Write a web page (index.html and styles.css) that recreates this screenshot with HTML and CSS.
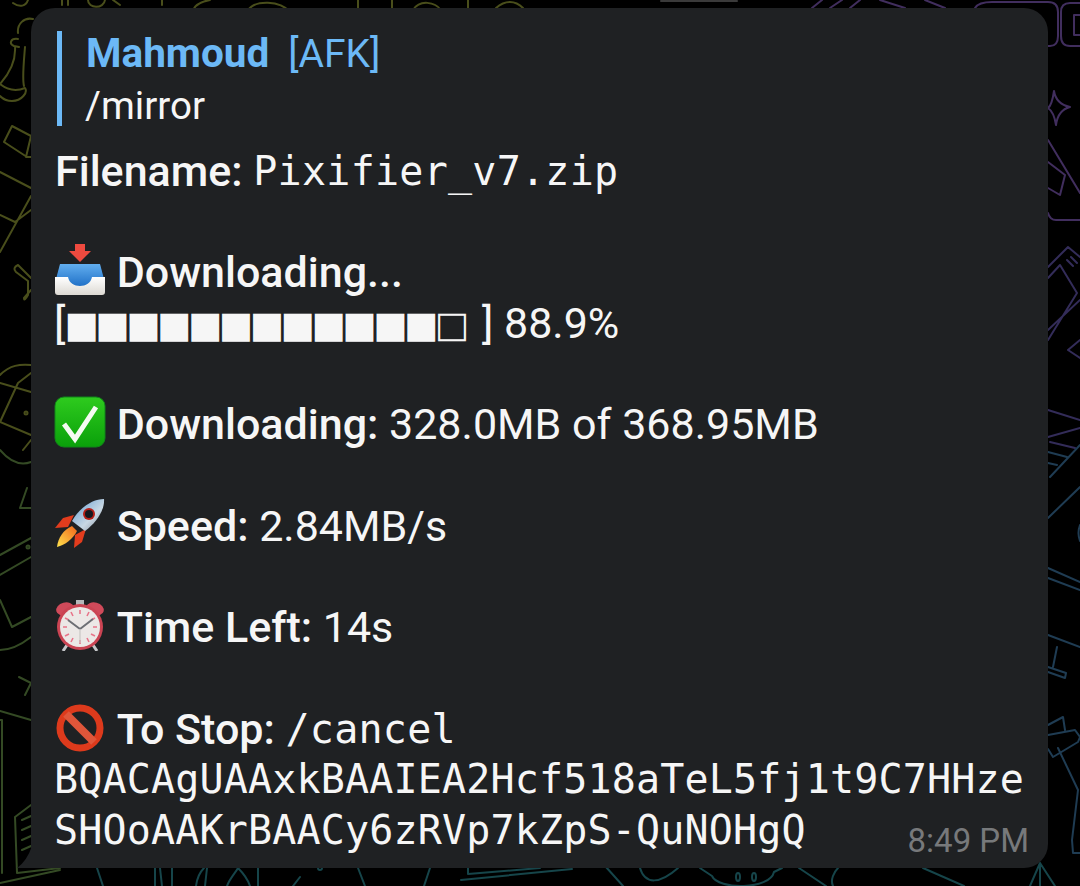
FILE: index.html
```html
<!DOCTYPE html>
<html lang="en">
<head>
<meta charset="utf-8">
<title>Mirror status message</title>
<link rel="stylesheet" href="styles.css">
</head>
<body>
<svg class="wallpaper" viewBox="0 0 1080 886" aria-hidden="true">
  <g class="doodle olive">
    <path d="M33 19C24 17 17 24 18 33M18 39C10 38 9 44 14 46L19 47M15 47C16 62 8 75 0 84M25 47C24 60 22 78 24 86M0 84C10 92 20 90 25 88C28 92 22 101 12 101C6 101 3 99 0 96"/>
    <path d="M31 136L12 126L4 142L27 157L31 157M31 136L26 157M0 172L31 188M31 196L0 252M0 215L15 222L31 210"/>
    <path d="M31 278L18 265Q12 268 16 272L28 281L28 295Q24 302 24 298L31 290"/>
    <path d="M0 375C10 365 20 364 31 365M0 383L31 392M0 422L18 383L31 373M0 422L31 435M31 440L23 450"/>
    <circle cx="26" cy="413" r="1.5"/>
    <path d="M13 3C20 8 26 6 28 0M62 0V5M68 0V5M88 0C88 9 104 9 105 0M113 0L120 5M193 10C196 3 204 1 210 0M248 10C255 0 280 0 290 12M358 0V14M392 0V14M413 10C420 -1 435 2 441 10M468 0V14M496 8C505 0 515 0 523 8M162 0V5"/>
  </g>
  <g class="doodle moss">
    <path d="M0 450C10 462 20 466 31 462M27 488L20 508L31 508M0 555L31 538M0 575L31 557M0 600L12 627L31 617M0 650C12 650 22 644 31 637M19 677L31 683L25 695M0 711L31 720M0 720H2V873"/>
    <circle cx="28" cy="547" r="1.5"/>
    <path d="M31 805L15 817L17 873M17 873L60 868M22 820L31 816M22 830L31 826M22 840L31 836M22 850L31 846M0 883L60 870"/>
  </g>
  <g class="doodle teal">
    <path d="M97 868L103 886M155 868V886M160 868L162 886M172 868V886M196 886C197 878 200 872 204 868M207 868L205 886M227 886C230 878 236 872 238 868C244 874 248 880 250 886M258 868V886M293 886L300 877M358 868L365 886M430 868L424 886"/>
    <circle cx="320" cy="868" r="2"/>
    <path d="M461 880L572 869M468 868L468 874L540 868M606 867L623 886M640 868C645 885 660 884 678 868M700 868L712 876C718 890 770 890 774 872L782 868"/>
    <ellipse cx="738" cy="877" rx="2" ry="4"/><ellipse cx="754" cy="877" rx="2" ry="4"/>
    <path d="M799 868L826 886M833 886C830 880 834 872 838 868M923 868L964 886M1030 886L1040 863L1040 886M1040 863L1055 886"/>
  </g>
  <g class="doodle purple">
    <path d="M975 8C978 3 985 2 992 2H1048Q1058 2 1058 12V36Q1058 46 1050 46H1048M1080 46H1070Q1061 46 1061 36V12Q1061 3 1070 3H1080M1080 15H1074V35H1080M1054 91Q1056 104 1070 107Q1058 110 1056 125Q1054 112 1048 108Q1052 105 1054 91Z"/>
    <path d="M1048 140L1080 193M1048 162L1065 175L1060 195L1048 188M1048 213Q1050 220 1056 220H1080M812 8L822 0M830 8L842 0M850 8L860 0M880 0L905 8M925 0L945 8"/>
    <path class="dim" d="M661 1H737"/>
  </g>
  <g class="doodle indigo">
    <path d="M1048 267L1068 247L1080 257M1048 278L1060 265L1077 293L1048 340M1048 330L1080 300M1067 260L1073 266M1071 257L1077 263M1080 340L1068 350L1080 358M1048 410L1080 420M1048 437L1080 428M1050 442L1075 448"/>
  </g>
  <g class="doodle navy">
    <path d="M1048 452L1067 457M1048 463L1057 465M1050 477L1080 445M1048 518L1080 487M1080 525Q1077 533 1080 541M1048 568L1080 582M1048 578L1080 590M1048 635L1080 647M1057 647L1053 667M1048 667L1066 673L1065 678L1048 672"/>
    <path d="M1048 725L1063 717L1065 730M1048 735L1075 730L1080 737L1078 742L1053 757L1048 749M1058 748L1078 790L1072 840L1073 853L1080 853"/>
  </g>
</svg>

<main class="bubble">
  <svg class="tail" viewBox="0 0 15 22" aria-hidden="true"><path d="M15 0V22H0Q10 15 15 0Z"/></svg>

  <section class="reply">
    <p class="reply-author"><b>Mahmoud</b><span class="reply-tag">[AFK]</span></p>
    <p class="reply-text">/mirror</p>
  </section>

  <div class="message">
    <p class="row"><b>Filename:</b> <code>Pixifier_v7.zip</code></p>

    <p class="row spaced">
      <svg class="emoji" viewBox="0 0 52 52" aria-hidden="true">
        <defs>
          <linearGradient id="trayBlue" x1="0" y1="0" x2="0" y2="1"><stop offset="0" stop-color="#62aeef"/><stop offset="1" stop-color="#1b6cc4"/></linearGradient>
          <linearGradient id="trayWhite" x1="0" y1="0" x2="0" y2="1"><stop offset="0" stop-color="#ffffff"/><stop offset="1" stop-color="#dcd9d2"/></linearGradient>
        </defs>
        <path d="M21 0H31V7H37L26 18L15 7H21Z" fill="#ee4a3f"/>
        <path d="M6 20H46L50 35V44H2V35Z" fill="url(#trayBlue)"/>
        <path d="M1 33H14C16 45 36 45 38 33H51V48Q51 51 48 51H4Q1 51 1 48Z" fill="url(#trayWhite)"/>
      </svg>
      <b>Downloading...</b>
    </p>
    <p class="row progress"><span class="bar-ends">[</span><span class="bar">■■■■■■■■■■■■□</span><span class="bar-ends">]</span> 88.9%</p>

    <p class="row spaced">
      <svg class="emoji" viewBox="0 0 52 52" aria-hidden="true">
        <defs>
          <linearGradient id="checkGreen" x1="0" y1="0" x2="0" y2="1"><stop offset="0" stop-color="#2ecb1e"/><stop offset="1" stop-color="#0aa00a"/></linearGradient>
        </defs>
        <rect x="1" y="1" width="50" height="50" rx="9" fill="url(#checkGreen)" stroke="#11861a"/>
        <path d="M10 28L21 43L42 11" fill="none" stroke="#f4fbf2" stroke-width="5"/>
      </svg>
      <b>Downloading:</b> 328.0MB of 368.95MB
    </p>

    <p class="row spaced">
      <svg class="emoji" viewBox="0 0 52 52" aria-hidden="true">
        <defs>
          <linearGradient id="rocketBody" x1="0" y1="0" x2="1" y2="1"><stop offset="0" stop-color="#5d98cf"/><stop offset=".6" stop-color="#c9d8e4"/><stop offset="1" stop-color="#7d8794"/></linearGradient>
          <linearGradient id="rocketFlame" x1="1" y1="0" x2="0" y2="1"><stop offset="0" stop-color="#f0651b"/><stop offset="1" stop-color="#ffe34d"/></linearGradient>
        </defs>
        <path d="M1 30L9 20L20 17L14 29Z" fill="#e23c1d"/>
        <path d="M20 50L28 44L32 31L21 37Z" fill="#e23c1d"/>
        <path d="M3 49C4 40 9 32 18 28L23 33C19 41 11 47 3 49Z" fill="url(#rocketFlame)"/>
        <path d="M50 1C51 12 42 25 31 33L18 23C26 9 39 1 50 1Z" fill="url(#rocketBody)"/>
        <circle cx="35" cy="16" r="6" fill="#b51f17"/>
        <circle cx="35" cy="16" r="4" fill="#14181f"/>
      </svg>
      <b>Speed:</b> 2.84MB/s
    </p>

    <p class="row spaced">
      <svg class="emoji" viewBox="0 0 52 52" aria-hidden="true">
        <path d="M13 46L9 52M39 46L43 52" stroke="#c5c7c9" stroke-width="3"/>
        <ellipse cx="11" cy="10" rx="9" ry="6.5" transform="rotate(-15 11 10)" fill="#d04a5a"/>
        <ellipse cx="41" cy="10" rx="9" ry="6.5" transform="rotate(15 41 10)" fill="#d04a5a"/>
        <rect x="22" y="1" width="8" height="5" fill="#b6b8ba"/>
        <circle cx="26" cy="28" r="23" fill="#cb4453"/>
        <circle cx="26" cy="28" r="20" fill="#ece8e6"/>
        <path d="M26 11V15M26 41V45M9 28H13M39 28H43M17 13L19 17M35 13L33 17M11 19L15 21M41 19L37 21M11 37L15 35M41 37L37 35M17 43L19 39M35 43L33 39" stroke="#e8758a" stroke-width="1.6"/>
        <path d="M26 30L14 21M26 30L39 20" stroke="#6d6f74" stroke-width="2"/>
        <path d="M26 30V44" stroke="#c9c6c4" stroke-width="1.2"/>
      </svg>
      <b>Time Left:</b> 14s
    </p>

    <p class="row spaced">
      <svg class="emoji" viewBox="0 0 52 52" aria-hidden="true">
        <circle cx="26" cy="27" r="20" fill="none" stroke="#dd3a1c" stroke-width="7"/>
        <path d="M12 13L40 41" stroke="#e0563a" stroke-width="8"/>
      </svg>
      <b>To Stop:</b> <code>/cancel</code>
    </p>
    <p class="row mono-row"><code>BQACAgUAAxkBAAIEA2Hcf518aTeL5fj1t9C7HHze</code></p>
    <p class="row mono-row"><code>SHOoAAKrBAACy6zRVp7kZpS-QuNOHgQ</code></p>
  </div>

  <time class="stamp">8:49 PM</time>
</main>
</body>
</html>
```

FILE: styles.css
```css
* {
  box-sizing: border-box;
}

html,
body {
  margin: 0;
  height: 100%;
}

body {
  position: relative;
  overflow: hidden;
  background: #000;
  font-family: Roboto, "Liberation Sans", sans-serif;
  color: #f6f6f6;
}

p {
  margin: 0;
}

.wallpaper {
  position: absolute;
  inset: 0;
  width: 1080px;
  height: 886px;
}

.doodle {
  fill: none;
  stroke-width: 2;
  stroke-linecap: round;
  stroke-linejoin: round;
}

.olive { stroke: #494e1b; }
.moss { stroke: #344a24; }
.teal { stroke: #16454a; }
.purple { stroke: #412e5e; }
.indigo { stroke: #332c59; }
.navy { stroke: #1f3c53; }
.dim { stroke: #3a3a3a; }

.bubble {
  position: relative;
  width: 1017px;
  height: 860px;
  margin: 8px 0 0 31px;
  padding: 23px 24px 0;
  background: #1f2123;
  border-radius: 24px 24px 24px 0;
}

.tail {
  position: absolute;
  left: -14px;
  bottom: 0;
  width: 15px;
  height: 22px;
  fill: #1f2123;
}

.reply {
  height: 95px;
  margin: 0 0 20px 2px;
  padding-left: 24px;
  border-left: 5px solid #6cb9f6;
}

.reply-author {
  height: 47px;
  line-height: 45px;
  font-size: 40.5px;
  color: #6cb9f6;
}

.reply-author b {
  font-weight: 700;
}

.reply-tag {
  margin-left: 19px;
  font-size: 39px;
}

.reply-text {
  line-height: 56px;
  font-size: 38.6px;
  margin-left: -1px;
}

.message {
  font-size: 43px;
}

.row {
  height: 50.7px;
  line-height: 50.7px;
  white-space: nowrap;
}

.row b {
  font-weight: 500;
}

.spaced {
  margin-top: 50.7px;
}

code {
  font-family: "DejaVu Sans Mono", "Liberation Mono", monospace;
  font-size: 40px;
  letter-spacing: 0.26px;
  vertical-align: 1px;
}

.mono-row {
  margin-left: -1px;
}

.mono-row code {
  letter-spacing: 0.165px;
}

.emoji {
  display: inline-block;
  width: 52px;
  height: 52px;
  margin: -12px 0 -12px -1px;
  vertical-align: 3px;
}

.progress {
  margin-left: -1px;
}

.bar {
  margin: 0 16px 0 -1px;
  font-family: "DejaVu Sans", sans-serif;
  font-size: 36.4px;
  letter-spacing: -3.5px;
  vertical-align: 1px;
}

.bar-ends {
  font-weight: 400;
}

.stamp {
  position: absolute;
  right: 19px;
  bottom: 9px;
  font-size: 33px;
  line-height: 36px;
  color: #77797b;
}
```
